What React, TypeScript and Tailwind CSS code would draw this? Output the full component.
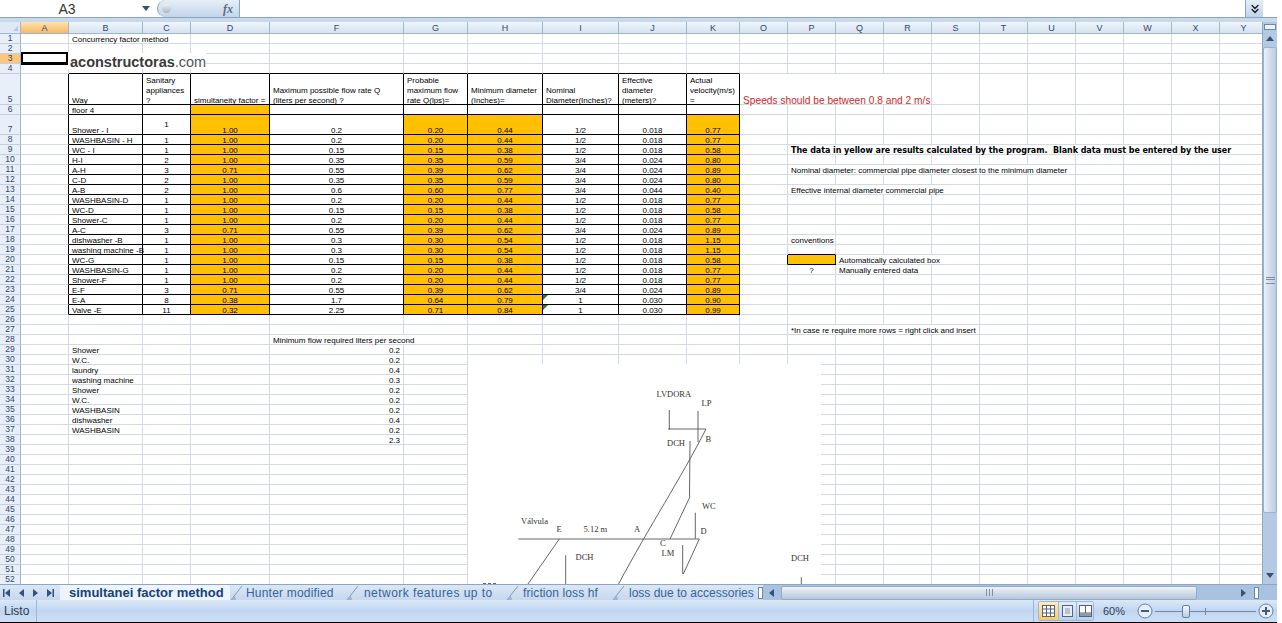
import { ChevronsDown } from "lucide-react";

type Cell = { t?: string; align?: "l" | "c" | "r"; fill?: boolean; span?: number; mid?: boolean; tri?: boolean; cls?: string };

const COLS = ["A", "B", "C", "D", "F", "G", "H", "I", "J", "K", "O", "P", "Q", "R", "S", "T", "U", "V", "W", "X", "Y"];
const ROW_COUNT = 52;

const SPAN: Record<number, string> = {
  2: "col-span-2",
  3: "col-span-3",
  4: "col-span-4",
  6: "col-span-6",
  9: "col-span-9",
};

// way, appliances, factor, Q, probable, min diameter, nominal, effective, velocity
const FLOW: [string, string, string, string, string, string, string, string, string][] = [
  ["Shower - I", "1", "1.00", "0.2", "0.20", "0.44", "1/2", "0.018", "0.77"],
  ["WASHBASIN - H", "1", "1.00", "0.2", "0.20", "0.44", "1/2", "0.018", "0.77"],
  ["WC - I", "1", "1.00", "0.15", "0.15", "0.38", "1/2", "0.018", "0.58"],
  ["H-I", "2", "1.00", "0.35", "0.35", "0.59", "3/4", "0.024", "0.80"],
  ["A-H", "3", "0.71", "0.55", "0.39", "0.62", "3/4", "0.024", "0.89"],
  ["C-D", "2", "1.00", "0.35", "0.35", "0.59", "3/4", "0.024", "0.80"],
  ["A-B", "2", "1.00", "0.6", "0.60", "0.77", "3/4", "0.044", "0.40"],
  ["WASHBASIN-D", "1", "1.00", "0.2", "0.20", "0.44", "1/2", "0.018", "0.77"],
  ["WC-D", "1", "1.00", "0.15", "0.15", "0.38", "1/2", "0.018", "0.58"],
  ["Shower-C", "1", "1.00", "0.2", "0.20", "0.44", "1/2", "0.018", "0.77"],
  ["A-C", "3", "0.71", "0.55", "0.39", "0.62", "3/4", "0.024", "0.89"],
  ["dishwasher -B", "1", "1.00", "0.3", "0.30", "0.54", "1/2", "0.018", "1.15"],
  ["washing machine -B", "1", "1.00", "0.3", "0.30", "0.54", "1/2", "0.018", "1.15"],
  ["WC-G", "1", "1.00", "0.15", "0.15", "0.38", "1/2", "0.018", "0.58"],
  ["WASHBASIN-G", "1", "1.00", "0.2", "0.20", "0.44", "1/2", "0.018", "0.77"],
  ["Shower-F", "1", "1.00", "0.2", "0.20", "0.44", "1/2", "0.018", "0.77"],
  ["E-F", "3", "0.71", "0.55", "0.39", "0.62", "3/4", "0.024", "0.89"],
  ["E-A", "8", "0.38", "1.7", "0.64", "0.79", "1", "0.030", "0.90"],
  ["Valve -E", "11", "0.32", "2.25", "0.71", "0.84", "1", "0.030", "0.99"],
];

const MIN_FLOW: [string, string][] = [
  ["Shower", "0.2"],
  ["W.C.", "0.2"],
  ["laundry", "0.4"],
  ["washing machine", "0.3"],
  ["Shower", "0.2"],
  ["W.C.", "0.2"],
  ["WASHBASIN", "0.2"],
  ["dishwasher", "0.4"],
  ["WASHBASIN", "0.2"],
  ["", "2.3"],
];

function buildCells() {
  const m: Record<number, Record<number, Cell>> = {};
  const put = (r: number, c: number, cell: Cell) => {
    m[r] = m[r] || {};
    m[r][c] = cell;
  };
  put(1, 1, { t: "Concurrency factor method", span: 2 });
  put(5, 1, { t: "Way" });
  put(5, 2, { t: "Sanitary\nappliances\n?" });
  put(5, 3, { t: "simultaneity factor =" });
  put(5, 4, { t: "Maximum possible flow rate Q\n(liters per second) ?" });
  put(5, 5, { t: "Probable\nmaximum flow\nrate Q(lps)=" });
  put(5, 6, { t: "Minimum diameter\n(Inches)=" });
  put(5, 7, { t: "Nominal\nDiameter(Inches)?" });
  put(5, 8, { t: "Effective\ndiameter\n(meters)?" });
  put(5, 9, { t: "Actual\nvelocity(m/s)\n=" });
  put(5, 10, { t: "Speeds should be between 0.8 and 2 m/s", span: 4, cls: "text-[10.2px] text-[#cf2a2a]" });
  put(6, 1, { t: "floor 4" });
  put(6, 3, { fill: true });
  FLOW.forEach((row, i) => {
    const r = 7 + i;
    put(r, 1, { t: row[0] });
    put(r, 2, { t: row[1], align: "c", mid: r === 7 });
    put(r, 3, { t: row[2], align: "c", fill: true });
    put(r, 4, { t: row[3], align: "c" });
    put(r, 5, { t: row[4], align: "c", fill: true });
    put(r, 6, { t: row[5], align: "c", fill: true });
    put(r, 7, { t: row[6], align: "c", tri: r >= 24 });
    put(r, 8, { t: row[7], align: "c" });
    put(r, 9, { t: row[8], align: "c", fill: true });
  });
  put(9, 11, {
    t: "The data in yellow are results calculated by the program.  Blank data must be entered by the user",
    span: 9,
    cls: "font-['DejaVu_Sans',sans-serif] font-bold text-[8px] text-black tracking-[-0.05px]",
  });
  put(11, 11, { t: "Nominal diameter: commercial pipe diameter closest to the minimum diameter", span: 6 });
  put(13, 11, { t: "Effective internal diameter commercial pipe", span: 4 });
  put(18, 11, { t: "conventions" });
  put(20, 11, { fill: true });
  put(20, 12, { t: "Automatically calculated box", span: 3 });
  put(21, 11, { t: "?", align: "c" });
  put(21, 12, { t: "Manually entered data", span: 2 });
  put(27, 11, { t: "*In case re require more rows = right click and insert", span: 4 });
  put(28, 4, { t: "Minimum flow required liters per second", span: 2 });
  MIN_FLOW.forEach(([name, val], i) => {
    const r = 29 + i;
    if (name) put(r, 1, { t: name });
    put(r, 4, { t: val, align: "r" });
  });
  return m;
}

const CELLS = buildCells();

function SheetRow({ r }: { r: number }) {
  const out = [
    <div
      key="h"
      className={`flex items-end justify-center border-r border-b border-r-[#9eb6ce] border-b-[#c3cfdf] text-[8.5px] leading-[9px] text-[#33466a] ${
        r === 3 ? "bg-[#fbc77c]" : "bg-[#e8eff8]"
      }`}
    >
      {r}
    </div>,
  ];
  for (let c = 0; c < COLS.length; c++) {
    const cell = CELLS[r]?.[c] ?? {};
    const span = cell.span ?? 1;
    const last = c + span - 1;
    const inTable = r >= 5 && r <= 25;
    const blackRight = (inTable && last <= 9) || (r === 20 && (last === 10 || last === 11));
    const blackBottom = (r >= 4 && r <= 25 && c >= 1 && c <= 9) || ((r === 19 || r === 20) && c === 11);
    out.push(
      <div
        key={c}
        className={`relative flex min-w-0 flex-col whitespace-pre border-r border-b px-[3px] leading-[10px] ${
          cell.cls ?? "text-[8px] text-black"
        } ${cell.mid ? "justify-center" : "justify-end"} ${
          cell.align === "c" ? "text-center" : cell.align === "r" ? "text-right" : "text-left"
        } ${blackRight ? "border-r-black" : "border-r-[#d4d9e6]"} ${
          blackBottom ? "border-b-black" : "border-b-[#d4d9e6]"
        } ${cell.fill ? "bg-[#ffc000]" : ""} ${span > 1 ? SPAN[span] : ""}`}
      >
        {cell.tri && (
          <span className="absolute top-0 left-0 h-0 w-0 border-t-[5px] border-r-[5px] border-t-[#2a7a2e] border-r-transparent" />
        )}
        {cell.t && <span className={`block ${cell.mid ? "" : "-mb-[2px]"}`}>{cell.t}</span>}
      </div>
    );
    c = last;
  }
  return <>{out}</>;
}

function Diagram() {
  const lines = [
    "M669.3 410V429.5",
    "M698 411V442",
    "M668 429H706",
    "M706 429C680 480 650 525 618 585",
    "M690 441L689.5 496.7",
    "M690 496.7L670 539",
    "M695.3 512.7V538.7",
    "M518.3 539H699.3",
    "M699.3 539L683.3 574",
    "M682.7 545V574",
    "M559.3 539L527.3 585",
    "M565.7 555.3V585",
    "M801.3 577.3V585",
    // tops of a label that the pane cuts off
    "M483 583.5h3M488 583.5h3M493 583.5h3",
  ];
  const labels: [string, number, number][] = [
    ["LVDORA", 656.5, 397],
    ["LP", 701.5, 405.5],
    ["DCH", 667, 446],
    ["B", 705.5, 441.5],
    ["WC", 702, 508.5],
    ["D", 700.5, 534],
    ["E", 556.5, 531.5],
    ["Válvula", 521, 523.5],
    ["5.12 m", 583.5, 532],
    ["A", 634, 532],
    ["C", 660, 545.5],
    ["LM", 661.5, 556],
    ["DCH", 575.5, 559.5],
    ["DCH", 791, 560.5],
  ];
  return (
    <div className="absolute top-[342px] left-[468px] h-[220px] w-[353px] bg-white">
      <svg width="353" height="220" viewBox="468 364 353 220" className="block">
        {lines.map((d) => (
          <path key={d} d={d} fill="none" stroke="#555" strokeWidth="0.9" />
        ))}
        {labels.map(([t, x, y]) => (
          <text key={t + x} x={x} y={y} fontFamily="'Liberation Serif', serif" fontSize="8.5" fill="#333">
            {t}
          </text>
        ))}
      </svg>
    </div>
  );
}

function TabSlant() {
  return (
    <svg width="14" height="16" viewBox="0 0 14 16" className="shrink-0">
      <path d="M1 15L12 1" stroke="#7f99ba" fill="none" />
      <path d="M1 15H6L5 11Z" fill="#9db3ce" />
    </svg>
  );
}

function Triangle({ dir, className }: { dir: "l" | "r" | "u" | "d"; className?: string }) {
  const pts = { l: "5,0 5,8 0,4", r: "0,0 0,8 5,4", u: "0,5 8,5 4,0", d: "0,0 8,0 4,5" }[dir];
  const w = dir === "l" || dir === "r" ? 5 : 8;
  const h = dir === "l" || dir === "r" ? 8 : 5;
  return (
    <svg width={w} height={h} viewBox={`0 0 ${w} ${h}`} className={className}>
      <polygon points={pts} fill="#33507a" />
    </svg>
  );
}

function TabNav() {
  return (
    <div className="flex w-[60px] shrink-0 items-center gap-[9px] pl-[3px]">
      <svg width="7" height="8" viewBox="0 0 7 8"><path d="M0 0h1.5v8H0zM7 0v8L2 4z" fill="#33507a" /></svg>
      <Triangle dir="l" />
      <Triangle dir="r" />
      <svg width="7" height="8" viewBox="0 0 7 8"><path d="M0 0v8l5-4zM5.5 0H7v8H5.5z" fill="#33507a" /></svg>
    </div>
  );
}

function ViewButtons() {
  return (
    <div className="flex h-[20px] w-[56px] overflow-hidden rounded-[2px] border border-[#9db7d8]">
      <div className="flex w-[19px] items-center justify-center bg-gradient-to-b from-[#fdeeb8] to-[#fbc964]">
        <svg width="13" height="12" viewBox="0 0 13 12">
          <rect x="0.5" y="0.5" width="12" height="11" fill="#fff" stroke="#55657d" />
          <path d="M0 4h13M0 8h13M4.5 0v12M8.5 0v12" stroke="#55657d" />
        </svg>
      </div>
      <div className="flex w-[19px] items-center justify-center border-x border-[#9db7d8] bg-gradient-to-b from-[#e2ecf8] to-[#bcd1eb]">
        <svg width="11" height="12" viewBox="0 0 11 12">
          <rect x="0.5" y="0.5" width="10" height="11" fill="#e8ecf2" stroke="#55657d" />
          <rect x="3" y="3" width="5" height="6" fill="#b7c2d2" />
        </svg>
      </div>
      <div className="flex flex-1 items-center justify-center bg-gradient-to-b from-[#e2ecf8] to-[#bcd1eb]">
        <svg width="13" height="12" viewBox="0 0 13 12">
          <rect x="0.5" y="0.5" width="12" height="11" fill="#fff" stroke="#55657d" />
          <path d="M0.5 8H12.5M6.5 0V8" stroke="#55657d" />
          <rect x="1" y="8" width="11" height="3" fill="#8c9bb0" />
        </svg>
      </div>
    </div>
  );
}

function ZoomButton({ plus }: { plus?: boolean }) {
  return (
    <svg width="16" height="16" viewBox="0 0 16 16" className="shrink-0">
      <circle cx="8" cy="8" r="7" fill="#e4edf8" stroke="#66809f" />
      <path d={plus ? "M4 8H12M8 4V12" : "M4 8H12"} stroke="#45597a" strokeWidth="2" />
    </svg>
  );
}

export default function App() {
  const rows = Array.from({ length: ROW_COUNT }, (_, i) => i + 1);
  return (
    <div className="flex h-[623px] w-[1277px] flex-col overflow-hidden bg-white font-['Liberation_Sans',Arial,sans-serif]">
      {/* formula bar */}
      <div className="flex h-[18px] shrink-0 items-stretch border-b border-[#8ca3bd] bg-white">
        <div className="relative flex w-[157px] shrink-0 items-center">
          <span className="w-[134px] text-center text-[14px] leading-none text-[#333]">A3</span>
          <Triangle dir="d" className="ml-[8px]" />
        </div>
        <div className="flex w-[83px] shrink-0 items-center justify-between rounded-l-[10px] border-r border-l border-[#8ca3bd] bg-gradient-to-b from-[#e6eef8] to-[#c4d5ea] pr-[6px] pl-[4px]">
          <span className="h-[9px] w-[9px] rounded-full bg-gradient-to-b from-[#f2f2f2] to-[#a8b4c4]" />
          <span className="font-['Liberation_Serif',serif] text-[12px] font-bold italic leading-none text-[#5a6c85]">fx</span>
        </div>
        <div className="flex-1" />
        <div className="flex w-[18px] shrink-0 items-center justify-center border-l border-[#8ca3bd] bg-gradient-to-b from-[#e4edf8] to-[#c2d4ea]">
          <ChevronsDown size={14} strokeWidth={2.5} className="text-[#222]" />
        </div>
        <div className="w-[14px] shrink-0 bg-white" />
      </div>
      <div className="h-[4px] shrink-0 bg-[#c9d9ec]" />

      {/* sheet */}
      <div className="flex min-h-0 flex-1">
        <div className="relative h-[562px] w-[1262px] shrink-0 overflow-hidden">
          <div className="grid w-[1268px] grid-cols-[21px_48px_74px_48px_79px_134px_64px_75px_76px_68px_53px_repeat(11,48px)] grid-rows-[12px_repeat(4,10px)_31px_10px_20px_repeat(45,10px)]">
            <div className="flex items-end justify-end border-r border-b border-[#9eb6ce] bg-[#dfe8f4] p-[2px]">
              <span className="h-0 w-0 border-b-[5px] border-l-[5px] border-b-[#b4c6dc] border-l-transparent" />
            </div>
            {COLS.map((c) => (
              <div
                key={c}
                className={`flex items-end justify-center border-r border-b border-[#9eb6ce] bg-gradient-to-b text-[9px] leading-[10px] text-[#33466a] ${
                  c === "A" ? "from-[#fce3aa] to-[#f9b863]" : "from-[#f0f5fb] to-[#d6e2f1]"
                }`}
              >
                {c}
              </div>
            ))}
            {rows.map((r) => (
              <SheetRow key={r} r={r} />
            ))}
          </div>

          {/* pasted logo and selected cell lie over the grid */}
          <div className="absolute top-[31px] left-[68px] flex h-[16px] w-[138px] items-center bg-white pt-[2px] pl-[2px] text-[14.5px] leading-none text-[#3a3a3a]">
            <span className="font-bold">aconstructoras</span>
            <span className="text-[#555]">.com</span>
          </div>
          <div className="absolute top-[30px] left-[21px] h-[13px] w-[47px] border-t-2 border-r-2 border-b-[3px] border-l-2 border-black bg-white" />
          <Diagram />
        </div>

        {/* vertical scrollbar */}
        <div className="flex w-[15px] shrink-0 flex-col items-center border-l border-[#8fa7c4] bg-[#b3c9e4]">
          <div className="mt-[2px] h-[6px] w-[12px] border border-[#6d87a8] bg-[#eef3fa]" />
          <Triangle dir="u" className="mt-[6px]" />
          <div className="mt-[6px] flex h-[466px] w-[14px] flex-col items-center justify-center rounded-[2px] border border-[#9db2cc] bg-gradient-to-r from-[#eaf0f8] to-[#b9cce3]">
            <div className="h-[7px] w-[9px] border-y border-[#7d8fa6]">
              <div className="mt-[1px] h-[1px] bg-[#7d8fa6]" />
            </div>
          </div>
          <div className="flex-1" />
          <Triangle dir="d" className="mb-[6px]" />
        </div>
      </div>

      {/* sheet tabs */}
      <div className="flex h-[16px] shrink-0 items-center border-t border-[#8ca7c6] bg-gradient-to-b from-[#dbe7f5] to-[#c6d8ee]">
        <TabNav />
        <div className="flex h-full w-[170px] shrink-0 items-center bg-[#eef4fb] pl-[9px] text-[13px] leading-none font-bold text-[#15427c]">
          simultanei factor method
        </div>
        <TabSlant />
        <div className="w-[102px] shrink-0 pl-[2px] text-[12px] leading-none tracking-[0.2px] whitespace-nowrap text-[#34639e]">Hunter modified</div>
        <TabSlant />
        <div className="w-[146px] shrink-0 pl-[4px] text-[12px] leading-none tracking-[0.45px] whitespace-nowrap text-[#34639e]">network features up to</div>
        <TabSlant />
        <div className="w-[92px] shrink-0 pl-[3px] text-[12px] leading-none tracking-[0.1px] whitespace-nowrap text-[#34639e]">friction loss hf</div>
        <TabSlant />
        <div className="w-[132px] shrink-0 pl-[3px] text-[12px] leading-none whitespace-nowrap text-[#34639e]">loss due to accessories</div>
        <div className="h-[12px] w-[5px] shrink-0 border border-[#6d87a8] bg-white" />
        <div className="flex h-full flex-1 items-center bg-[#a9c2e0] pl-[6px]">
          <Triangle dir="l" />
          <div className="ml-[7px] flex h-[14px] w-[416px] items-center justify-center rounded-[2px] border border-[#96abc6] bg-gradient-to-b from-[#eef3f9] to-[#b5c6db]">
            <span className="h-[7px] w-[7px] border-x border-[#7d8fa6] bg-[linear-gradient(90deg,transparent_40%,#7d8fa6_40%,#7d8fa6_60%,transparent_60%)]" />
          </div>
          <Triangle dir="r" className="ml-[44px]" />
          <div className="ml-[8px] h-[12px] w-[5px] border border-[#6d87a8] bg-white" />
        </div>
      </div>

      {/* status bar */}
      <div className="flex h-[23px] shrink-0 items-center border-b border-black bg-gradient-to-b from-[#dbe8f8] via-[#c0d5f0] to-[#cfe0f5] text-[#2b3c55]">
        <div className="flex h-full w-[37px] shrink-0 items-center border-r border-[#9db7d8] pl-[4px] text-[12px] leading-none">Listo</div>
        <div className="flex-1" />
        <div className="flex h-full w-[244px] shrink-0 items-center border-l border-[#9db7d8] pl-[4px]">
          <ViewButtons />
          <span className="ml-[9px] w-[34px] text-[11px] leading-none">60%</span>
          <ZoomButton />
          <div className="relative mx-[2px] h-[1px] w-[101px] bg-[#6d87a8]">
            <span className="absolute top-[-3px] left-[50px] h-[7px] w-[1px] bg-[#6d87a8]" />
            <span className="absolute top-[-6px] left-[27px] h-[13px] w-[8px] rounded-[2px] border border-[#66809f] bg-gradient-to-b from-[#f4f7fb] to-[#bccde2]" />
          </div>
          <ZoomButton plus />
        </div>
      </div>
    </div>
  );
}
